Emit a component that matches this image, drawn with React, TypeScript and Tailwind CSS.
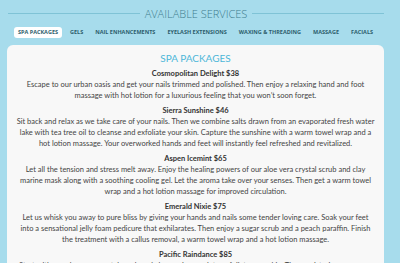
import React from 'react'

const tabs = ['SPA PACKAGES', 'GELS', 'NAIL ENHANCEMENTS', 'EYELASH EXTENSIONS', 'WAXING & THREADING', 'MASSAGE', 'FACIALS']

const packages = [
  {
    name: 'Cosmopolitan Delight $38',
    text: 'Escape to our urban oasis and get your nails trimmed and polished. Then enjoy a relaxing hand and foot massage with hot lotion for a luxurious feeling that you won\u2019t soon forget.',
  },
  {
    name: 'Sierra Sunshine $46',
    text: 'Sit back and relax as we take care of your nails. Then we combine salts drawn from an evaporated fresh water lake with tea tree oil to cleanse and exfoliate your skin. Capture the sunshine with a warm towel wrap and a hot lotion massage. Your overworked hands and feet will instantly feel refreshed and revitalized.',
  },
  {
    name: 'Aspen Icemint $65',
    text: 'Let all the tension and stress melt away. Enjoy the healing powers of our aloe vera crystal scrub and clay marine mask along with a soothing cooling gel. Let the aroma take over your senses. Then get a warm towel wrap and a hot lotion massage for improved circulation.',
  },
  {
    name: 'Emerald Nixie $75',
    text: 'Let us whisk you away to pure bliss by giving your hands and nails some tender loving care. Soak your feet into a sensational jelly foam pedicure that exhilarates. Then enjoy a sugar scrub and a peach paraffin. Finish the treatment with a callus removal, a warm towel wrap and a hot lotion massage.',
  },
  {
    name: 'Pacific Raindance $85',
    text: 'Start with our aloe vera crystal scrub and clay marine mask to exfoliate your skin. Then moisturize your arms and legs with a rich lotion and finish with a warm towel wrap and a relaxing massage.',
  },
]

export default function App() {
  return (
    <div className="min-h-screen bg-[#a7dcec] px-[7px] pt-[6px]" style={{ fontFamily: 'Lato, sans-serif' }}>
      <div className="flex items-center gap-[5px]">
        <div className="h-px flex-1 bg-[#7fc3d6] ml-[1px]" />
        <h1 className="text-[11px] font-light text-[#3f7c8e] leading-[15px]" style={{ fontFamily: '"Open Sans", sans-serif' }}>
          AVAILABLE SERVICES
        </h1>
        <div className="h-px flex-1 bg-[#7fc3d6] mr-[9px]" />
      </div>

      <div className="mt-[6px] flex items-center pl-[7px] gap-[12px]" style={{ fontFamily: '"Open Sans", sans-serif' }}>
        {tabs.map((t, i) => (
          <div
            key={t}
            className={
              'text-[5.5px] font-bold leading-[11px] text-[#2d5e6c] ' +
              (i === 0 ? 'bg-white rounded-[3px] px-[4px] -mr-[4px]' : '')
            }
          >
            {t}
          </div>
        ))}
      </div>

      <div className="mt-[7px] mr-[9px] bg-[#f8f8f8] rounded-t-[6px] pt-[7px] pb-4 px-[9px] text-center">
        <h2 className="text-[10px] text-[#4db7d8] leading-[12px] font-normal">SPA PACKAGES</h2>
        <div className="mt-[4px]">
          {packages.map((p) => (
            <div key={p.name} className="mb-[4px]">
              <h3 className="text-[7.5px] font-bold text-[#333] leading-[11px]">{p.name}</h3>
              <p className="text-[7.5px] text-[#444] leading-[11px]">{p.text}</p>
            </div>
          ))}
        </div>
      </div>
    </div>
  )
}
